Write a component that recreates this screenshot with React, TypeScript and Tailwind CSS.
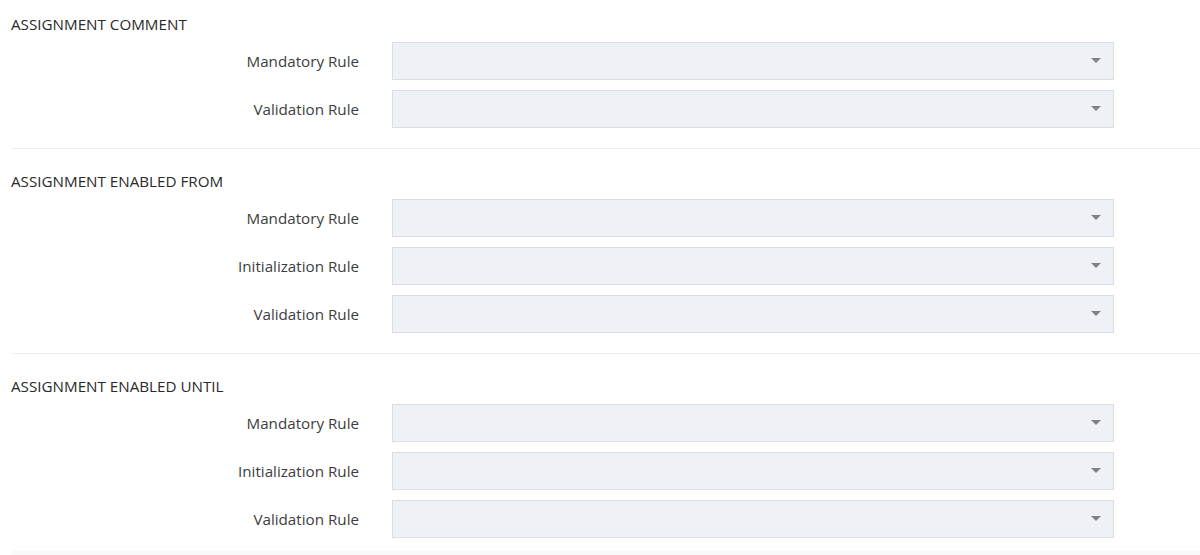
const sections = [
  { title: "ASSIGNMENT COMMENT", rules: ["Mandatory Rule", "Validation Rule"] },
  { title: "ASSIGNMENT ENABLED FROM", rules: ["Mandatory Rule", "Initialization Rule", "Validation Rule"] },
  { title: "ASSIGNMENT ENABLED UNTIL", rules: ["Mandatory Rule", "Initialization Rule", "Validation Rule"] },
];

function RuleSelect() {
  return (
    <div className="relative h-[38px] w-[722px] border border-[#dcdde0] bg-[#eef1f5]">
      <span
        className="absolute right-[12px] top-[15px] h-0 w-0 border-x-[5px] border-t-[5px] border-x-transparent border-t-[#808080]"
        aria-hidden
      />
    </div>
  );
}

function RuleRow({ label }: { label: string }) {
  return (
    <div className="flex items-center">
      <label className="w-[348px] shrink-0 text-right text-[15.2px] text-[#3d3d3d]">{label}</label>
      <div className="ml-[33px]">
        <RuleSelect />
      </div>
    </div>
  );
}

export default function App() {
  return (
    <div
      className="h-[555px] w-[1200px] overflow-hidden bg-white pl-[11px]"
      style={{ fontFamily: '"Open Sans", "Liberation Sans", sans-serif' }}
    >
      {sections.map((s, i) => (
        <section
          key={s.title}
          className={
            i === 0
              ? "border-b border-[#eeeeee] pb-[20px] pt-[14px]"
              : i === 1
                ? "border-b border-[#eeeeee] pb-[20px] pt-[22px]"
                : "pb-[12px] pt-[22px]"
          }
        >
          <h3 className="mb-[8px] h-[20px] text-[15.2px] leading-[20px] text-[#2a2a2a]">{s.title}</h3>
          <div className="flex flex-col gap-[10px]">
            {s.rules.map((r) => (
              <RuleRow key={r} label={r} />
            ))}
          </div>
        </section>
      ))}
      <div className="h-[8px] bg-[#f9f9f9]" />
    </div>
  );
}
